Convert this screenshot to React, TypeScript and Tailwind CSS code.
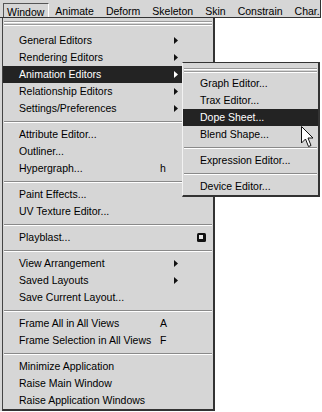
type Row =
  | { sep: true }
  | { label: string; arrow?: boolean; shortcut?: string; box?: boolean; active?: boolean; sep?: false };

const mainRows: Row[] = [
  { label: 'General Editors', arrow: true },
  { label: 'Rendering Editors', arrow: true },
  { label: 'Animation Editors', arrow: true, active: true },
  { label: 'Relationship Editors', arrow: true },
  { label: 'Settings/Preferences', arrow: true },
  { sep: true },
  { label: 'Attribute Editor...' },
  { label: 'Outliner...' },
  { label: 'Hypergraph...', shortcut: 'h' },
  { sep: true },
  { label: 'Paint Effects...' },
  { label: 'UV Texture Editor...' },
  { sep: true },
  { label: 'Playblast...', box: true },
  { sep: true },
  { label: 'View Arrangement', arrow: true },
  { label: 'Saved Layouts', arrow: true },
  { label: 'Save Current Layout...' },
  { sep: true },
  { label: 'Frame All in All Views', shortcut: 'A' },
  { label: 'Frame Selection in All Views', shortcut: 'F' },
  { sep: true },
  { label: 'Minimize Application' },
  { label: 'Raise Main Window' },
  { label: 'Raise Application Windows' },
];

const subRows: Row[] = [
  { label: 'Graph Editor...' },
  { label: 'Trax Editor...' },
  { label: 'Dope Sheet...', active: true },
  { label: 'Blend Shape...' },
  { sep: true },
  { label: 'Expression Editor...' },
  { sep: true },
  { label: 'Device Editor...' },
];

const menuBar = ['Animate', 'Deform', 'Skeleton', 'Skin', 'Constrain', 'Char.'];

function Separator() {
  return (
    <div className="h-[9px] pt-[4px] px-[1px]">
      <div className="h-px bg-[#8a8a8a]" />
      <div className="h-px bg-white" />
    </div>
  );
}

function TearOff({ top }: { top: string }) {
  return (
    <div className={`${top} px-[1px]`}>
      <div className="h-px bg-[#9a9a9a]" />
      <div className="h-px bg-white" />
      <div className="h-px" />
      <div className="h-px bg-[#9a9a9a]" />
      <div className="h-px bg-white" />
    </div>
  );
}

function Arrow({ light }: { light?: boolean }) {
  return (
    <svg width="4" height="7" viewBox="0 0 4 7">
      <polygon points="0,0 4,3.5 0,7" fill={light ? '#ffffff' : '#111111'} />
    </svg>
  );
}

function OptionBox() {
  return (
    <svg width="9" height="9" viewBox="0 0 9 9">
      <rect x="0" y="0" width="9" height="9" rx="1.5" fill="#111" />
      <rect x="2" y="2" width="4" height="4" fill="#e8e8e8" />
    </svg>
  );
}

export default function App() {
  return (
    <div className="relative w-[322px] h-[412px] overflow-hidden bg-white font-['Liberation_Sans',Arial,sans-serif] text-[10.5px] text-black">
      {/* menu bar */}
      <div className="flex h-[18px] w-[321px] bg-[#d6d6d6] border-b border-r border-[#333]">
        <div className="ml-[3px] mt-[3px] h-[14px] pl-[3px] pr-[4px] pt-[2px] leading-[12px] border-t border-l border-[#555] border-r border-r-white">
          Window
        </div>
        {menuBar.map(m => (
          <div key={m} className="px-[6px] pt-[5px] leading-[12px] whitespace-nowrap">
            {m}
          </div>
        ))}
      </div>

      {/* main menu */}
      <div className="w-[215px] bg-[#d6d6d6] pl-[2px]">
        <div className="border-l border-[#444] border-r-2 border-r-[#333] border-b-2 border-b-[#333]">
          <TearOff top="h-[14px] pt-[3px]" />
          {mainRows.map((row, i) =>
            row.sep ? (
              <Separator key={i} />
            ) : (
              <div
                key={i}
                className={`flex items-center h-[17px] pl-[16px] ${row.active ? 'bg-[#232323] text-white' : ''}`}
              >
                <span className="w-[138px] whitespace-nowrap leading-[17px]">{row.label}</span>
                <span className="w-[17px] pl-[3px] leading-[17px]">{row.shortcut}</span>
                <span className="w-[23px] flex items-center">{row.arrow && <Arrow light={row.active} />}</span>
                <span className="w-[9px] flex items-center">{row.box && <OptionBox />}</span>
              </div>
            )
          )}
        </div>
      </div>

      {/* animation editors submenu */}
      <div className="absolute left-[182px] top-[62px] w-[138px] bg-[#d6d6d6] border-t border-[#333] border-l border-l-[#f2f2f2] border-r-2 border-r-[#333] border-b-2 border-b-[#333]">
        <TearOff top="h-[12px] pt-[5px]" />
        {subRows.map((row, i) =>
          row.sep ? (
            <Separator key={i} />
          ) : (
            <div
              key={i}
              className={`h-[17px] pl-[17px] leading-[17px] whitespace-nowrap ${row.active ? 'bg-[#232323] text-white' : ''}`}
            >
              {row.label}
            </div>
          )
        )}
      </div>

      {/* mouse pointer */}
      <svg className="absolute left-[301px] top-[126px]" width="13" height="22" viewBox="0 0 13 22">
        <path d="M0.5 0.5 L0.5 17 L4.5 13 L7.5 20.5 L10 19.5 L7 12 L12 12 Z" fill="#fff" stroke="#111" strokeWidth="1" strokeLinejoin="miter" />
      </svg>
    </div>
  );
}
